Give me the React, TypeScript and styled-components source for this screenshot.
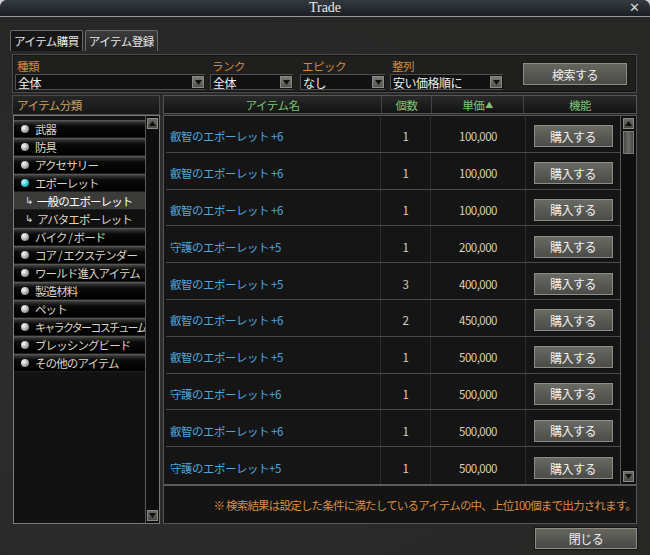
import React from "react";
import styled, { createGlobalStyle } from "styled-components";

const GlobalStyle = createGlobalStyle`
  html, body { margin: 0; padding: 0; background: #cfcfcf; }
  body { font-family: "Noto Sans CJK JP", "Noto Sans", sans-serif; font-size: 11px; }
  * { box-sizing: border-box; }
`;

const Window = styled.div`
  width: 650px;
  height: 555px;
  display: flex;
  flex-direction: column;
  background: radial-gradient(ellipse at 30% 60%, #303030, #272726 70%);
  border-radius: 7px 7px 0 0;
  overflow: hidden;
`;

const TitleBar = styled.div`
  height: 17px;
  flex: none;
  position: relative;
  display: flex;
  align-items: center;
  justify-content: center;
  background: linear-gradient(#343a40, #1b1f24);
  border-bottom: 1px solid #9a9a9a;
  border-radius: 7px 7px 0 0;
  color: #e8e8e8;
  font-family: "Liberation Serif", serif;
  font-size: 14px;
`;

const CloseX = styled.span`
  position: absolute;
  right: 10px;
  top: 0;
  height: 16px;
  line-height: 16px;
  font-family: "DejaVu Sans", sans-serif;
  font-size: 13px;
  color: #d8d8d8;
`;

const Body = styled.div`
  flex: 1;
  display: flex;
  flex-direction: column;
  padding: 13px 13px 3px 10px;
  letter-spacing: -0.5px;
`;

const Tabs = styled.div`
  display: flex;
  gap: 2px;
  height: 21px;
`;

const Tab = styled.div<{ $active?: boolean }>`
  height: 21px;
  padding: 0 3px;
  display: flex;
  align-items: center;
  color: #e8e8e8;
  font-size: 11.5px;
  background: ${(p) => (p.$active ? "#161616" : "linear-gradient(#3c3c3c, #262626)")};
  border: 1px solid #6a6a6a;
  border-bottom: none;
  border-radius: 2px 2px 0 0;
`;

const FilterBox = styled.div`
  margin: 3px 0 0 2px;
  height: 39px;
  display: flex;
  align-items: flex-start;
  padding: 3px 0 0 2px;
  background: #1f1f1e;
  border: 1px solid #4c4c4c;
  box-shadow: inset 0 0 0 1px #141414;
`;

const Field = styled.div<{ $w: number; $gap: number }>`
  width: ${(p) => p.$w}px;
  margin-right: ${(p) => p.$gap}px;
  display: flex;
  flex-direction: column;
`;

const FieldLabel = styled.div`
  height: 16px;
  padding-left: 2px;
  color: #cf8a3e;
  font-size: 11.5px;
  line-height: 16px;
`;

const Select = styled.div`
  height: 16px;
  display: flex;
  align-items: center;
  justify-content: space-between;
  background: #111;
  border: 1px solid #4e4e4e;
  border-right: none;
  padding-left: 2px;
  color: #f0f0f0;
  font-size: 12px;
`;

const Arrow = styled.span`
  width: 12px;
  height: 12px;
  margin-right: 1px;
  display: flex;
  align-items: center;
  justify-content: center;
  background: linear-gradient(#7a7a76, #555552);
  border: 1px solid #8a8a86;
`;

const SearchButton = styled.div`
  margin-top: 5px;
  margin-left: 20px;
  width: 104px;
  height: 22px;
  display: flex;
  align-items: center;
  justify-content: center;
  color: #f0f0f0;
  font-size: 12px;
  background: linear-gradient(#66665f, #4a4a46);
  border: 1px solid #8e8e88;
  box-shadow: 0 0 0 1px #1a1a1a;
`;

const Main = styled.div`
  margin: 2px 0 0 2px;
  height: 429px;
  display: flex;
  gap: 3px;
`;

const LeftPanel = styled.div`
  width: 148px;
  display: flex;
  flex-direction: column;
`;

const PanelHeader = styled.div`
  height: 20px;
  display: flex;
  align-items: center;
  padding-left: 4px;
  color: #c9a56a;
  font-size: 11.5px;
  background: linear-gradient(#262626, #161616);
  border: 1px solid #4a4a4a;
`;

const ListBox = styled.div`
  flex: 1;
  display: flex;
  margin-left: 1px;
  border: 1px solid #7a7a7a;
  background: #121212;
`;

const List = styled.div`
  flex: 1;
  min-width: 0;
  overflow: hidden;
  padding-top: 4px;
  display: flex;
  flex-direction: column;
`;

const Item = styled.div<{ $selected?: boolean; $sub?: boolean; $tight?: boolean }>`
  height: 18px;
  flex: none;
  display: flex;
  align-items: center;
  gap: 4px;
  padding-left: 7px;
  white-space: pre;
  letter-spacing: ${(p) => (p.$tight ? "-1.7px" : "-0.9px")};
  color: ${(p) => (p.$selected ? "#ffffff" : "#dcd5c4")};
  font-size: ${(p) => (p.$tight ? "11px" : "11.5px")};
  background: ${(p) =>
    p.$selected
      ? "#3b3b3a"
      : p.$sub
      ? "#101010"
      : "linear-gradient(#62625f 0px, #333332 2px, #0a0a0a 6px, #000 100%)"};
  border-bottom: 1px solid #1e1e1e;
`;

const Bullet = styled.span<{ $active?: boolean }>`
  width: 8px;
  height: 8px;
  border-radius: 50%;
  flex: none;
  margin-right: 2px;
  background: ${(p) =>
    p.$active
      ? "radial-gradient(circle at 35% 35%, #c8ffff, #2ab8c8 60%, #0d5a66)"
      : "radial-gradient(circle at 35% 35%, #ffffff, #a8a8a8 55%, #4a4a4a)"};
`;

const SubArrow = styled.span`
  color: #d8d8d8;
  font-size: 10px;
  width: 8px;
  margin-left: 4px;
  font-family: "DejaVu Sans", sans-serif;
`;

const ScrollTrack = styled.div<{ $w: number }>`
  width: ${(p) => p.$w}px;
  flex: none;
  display: flex;
  flex-direction: column;
  justify-content: space-between;
  align-items: center;
  padding: 2px 0;
  background: #0e0e0e;
  border-left: 1px solid #5a5a5a;
`;

const ScrollCol = styled.div`
  display: flex;
  flex-direction: column;
  align-items: center;
  gap: 2px;
`;

const ScrollBtn = styled.div`
  width: 11px;
  height: 11px;
  display: flex;
  align-items: center;
  justify-content: center;
  background: linear-gradient(#6a6a66, #4a4a48);
  border: 1px solid #8a8a86;
`;

const Thumb = styled.div`
  width: 11px;
  height: 23px;
  background: linear-gradient(90deg, #4a4a48, #6a6a66, #4a4a48);
  border: 1px solid #7a7a76;
`;

const RightPanel = styled.div`
  flex: 1;
  display: flex;
  flex-direction: column;
`;

const HeaderRow = styled.div`
  height: 19px;
  display: grid;
  grid-template-columns: 217px 50px 92px 1fr;
  background: linear-gradient(#2a2a2a, #121212);
  border: 1px solid #555;
`;

const HeaderCell = styled.div`
  display: flex;
  align-items: center;
  justify-content: center;
  color: #7cc475;
  font-size: 11.5px;
  border-left: 1px solid #444;
  &:first-child { border-left: none; }
`;

const SortMark = styled.span`
  font-size: 8px;
  margin-left: 1px;
`;

const TableBox = styled.div`
  flex: 1;
  display: flex;
  flex-direction: column;
  margin-top: 1px;
  border: 1px solid #555;
  background: #141414;
`;

const TableTop = styled.div`
  height: 370px;
  display: flex;
  padding-left: 2px;
  border-bottom: 2px solid #5c5c5c;
`;

const Rows = styled.div`
  flex: 1;
  display: flex;
  flex-direction: column;
`;

const Row = styled.div`
  height: 37px;
  display: grid;
  grid-template-columns: 214px 50px 95px 1fr;
  border-bottom: 1px solid #4a4a4a;
  background: #151515;
  &:last-child { border-bottom: none; }
`;

const Cell = styled.div<{ $align?: string; $color?: string }>`
  display: flex;
  align-items: center;
  padding-top: 5px;
  justify-content: ${(p) => p.$align || "center"};
  padding-left: ${(p) => (p.$align === "flex-start" ? "4px" : "0")};
  color: ${(p) => p.$color || "#d9d2b8"};
  font-size: 11.5px;
  border-left: 1px solid #2c2c2c;
  &:first-child { border-left: none; }
`;

const BuyButton = styled.div`
  width: 79px;
  height: 22px;
  display: flex;
  align-items: center;
  justify-content: center;
  color: #f2f2f2;
  font-size: 12px;
  background: linear-gradient(#6a6a64, #4b4b47);
  border: 1px solid #8e8e88;
  box-shadow: 0 0 0 1px #111;
`;

const Note = styled.div`
  flex: 1;
  display: flex;
  align-items: center;
  justify-content: flex-end;
  color: #d98c42;
  font-size: 11.5px;
  white-space: nowrap;
  letter-spacing: -0.8px;
`;

const Footer = styled.div`
  display: flex;
  justify-content: flex-end;
  margin-top: 4px;
`;

const CloseButton = styled.div`
  width: 102px;
  height: 21px;
  display: flex;
  align-items: center;
  justify-content: center;
  color: #f0f0f0;
  font-size: 12px;
  background: linear-gradient(#66665f, #484844);
  border: 1px solid #8e8e88;
  box-shadow: 0 0 0 1px #141414;
`;

const Tri = ({ up }: { up?: boolean }) => (
  <svg width="7" height="5" viewBox="0 0 7 5">
    <polygon points={up ? "0,5 7,5 3.5,0" : "0,0 7,0 3.5,5"} fill="#111" />
  </svg>
);

const categories: { name: string; sub?: boolean; active?: boolean; selected?: boolean; tight?: boolean }[] = [
  { name: "武器" },
  { name: "防具" },
  { name: "アクセサリー" },
  { name: "エポーレット", active: true },
  { name: "一般のエポーレット", sub: true, selected: true },
  { name: "アバタエポーレット", sub: true },
  { name: "バイク / ボード" },
  { name: "コア / エクステンダー" },
  { name: "ワールド進入アイテム" },
  { name: "製造材料" },
  { name: "ペット" },
  { name: "キャラクターコスチューム", tight: true },
  { name: "ブレッシングビード" },
  { name: "その他のアイテム" },
];

const items = [
  ["叡智のエポーレット +6", "1", "100,000"],
  ["叡智のエポーレット +6", "1", "100,000"],
  ["叡智のエポーレット +6", "1", "100,000"],
  ["守護のエポーレット+5", "1", "200,000"],
  ["叡智のエポーレット +5", "3", "400,000"],
  ["叡智のエポーレット +6", "2", "450,000"],
  ["叡智のエポーレット +5", "1", "500,000"],
  ["守護のエポーレット+6", "1", "500,000"],
  ["叡智のエポーレット +6", "1", "500,000"],
  ["守護のエポーレット+5", "1", "500,000"],
];

export default function App() {
  return (
    <>
      <GlobalStyle />
      <Window>
        <TitleBar>
          Trade
          <CloseX>✕</CloseX>
        </TitleBar>
        <Body>
          <Tabs>
            <Tab $active>アイテム購買</Tab>
            <Tab>アイテム登録</Tab>
          </Tabs>
          <FilterBox>
            <Field $w={190} $gap={5}>
              <FieldLabel>種類</FieldLabel>
              <Select>
                全体
                <Arrow><Tri /></Arrow>
              </Select>
            </Field>
            <Field $w={83} $gap={7}>
              <FieldLabel>ランク</FieldLabel>
              <Select>
                全体
                <Arrow><Tri /></Arrow>
              </Select>
            </Field>
            <Field $w={85} $gap={5}>
              <FieldLabel>エピック</FieldLabel>
              <Select>
                なし
                <Arrow><Tri /></Arrow>
              </Select>
            </Field>
            <Field $w={113} $gap={0}>
              <FieldLabel>整列</FieldLabel>
              <Select>
                安い価格順に
                <Arrow><Tri /></Arrow>
              </Select>
            </Field>
            <SearchButton>検索する</SearchButton>
          </FilterBox>
          <Main>
            <LeftPanel>
              <PanelHeader>アイテム分類</PanelHeader>
              <ListBox>
                <List>
                  {categories.map((c, i) => (
                    <Item key={i} $sub={c.sub} $selected={c.selected} $tight={c.tight}>
                      {c.sub ? <SubArrow>↳</SubArrow> : <Bullet $active={c.active} />}
                      {c.name}
                    </Item>
                  ))}
                </List>
                <ScrollTrack $w={14}>
                  <ScrollBtn><Tri up /></ScrollBtn>
                  <ScrollBtn><Tri /></ScrollBtn>
                </ScrollTrack>
              </ListBox>
            </LeftPanel>
            <RightPanel>
              <HeaderRow>
                <HeaderCell>アイテム名</HeaderCell>
                <HeaderCell>個数</HeaderCell>
                <HeaderCell>単価<SortMark>▲</SortMark></HeaderCell>
                <HeaderCell>機能</HeaderCell>
              </HeaderRow>
              <TableBox>
                <TableTop>
                  <Rows>
                    {items.map((it, i) => (
                      <Row key={i}>
                        <Cell $align="flex-start" $color="#4ea6dc">{it[0]}</Cell>
                        <Cell>{it[1]}</Cell>
                        <Cell>{it[2]}</Cell>
                        <Cell><BuyButton>購入する</BuyButton></Cell>
                      </Row>
                    ))}
                  </Rows>
                  <ScrollTrack $w={16}>
                    <ScrollCol>
                      <ScrollBtn><Tri up /></ScrollBtn>
                      <Thumb />
                    </ScrollCol>
                    <ScrollBtn><Tri /></ScrollBtn>
                  </ScrollTrack>
                </TableTop>
                <Note>※ 検索結果は設定した条件に満たしているアイテムの中、上位100個まで出力されます。</Note>
              </TableBox>
            </RightPanel>
          </Main>
          <Footer>
            <CloseButton>閉じる</CloseButton>
          </Footer>
        </Body>
      </Window>
    </>
  );
}
